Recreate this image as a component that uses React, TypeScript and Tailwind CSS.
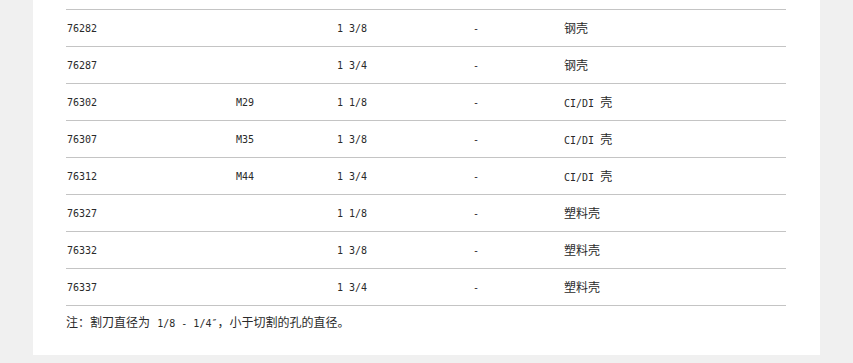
import React from 'react';

const rows = [
  { no: '76282', thread: '', size: '1 3/8', x: '-', shell: '钢壳' },
  { no: '76287', thread: '', size: '1 3/4', x: '-', shell: '钢壳' },
  { no: '76302', thread: 'M29', size: '1 1/8', x: '-', shell: 'CI/DI 壳' },
  { no: '76307', thread: 'M35', size: '1 3/8', x: '-', shell: 'CI/DI 壳' },
  { no: '76312', thread: 'M44', size: '1 3/4', x: '-', shell: 'CI/DI 壳' },
  { no: '76327', thread: '', size: '1 1/8', x: '-', shell: '塑料壳' },
  { no: '76332', thread: '', size: '1 3/8', x: '-', shell: '塑料壳' },
  { no: '76337', thread: '', size: '1 3/4', x: '-', shell: '塑料壳' },
];

const font = "font-['DejaVu_Sans_Mono','Noto_Sans_CJK_SC',monospace]";

function Shell({ text }: { text: string }) {
  // latin part stays 10px mono, CJK glyphs sit at 12px like the original
  const parts = text.split(/([\u4e00-\u9fff]+)/);
  return (
    <>
      {parts.map((p, i) =>
        /[\u4e00-\u9fff]/.test(p) ? (
          <span key={i} className="text-[12px]">{p}</span>
        ) : (
          <span key={i}>{p}</span>
        )
      )}
    </>
  );
}

export default function App() {
  return (
    <div className="w-[853px] h-[363px] bg-[#f0f0f0] overflow-hidden">
      <div className={`ml-[33px] w-[787px] bg-white pl-[33px] pt-[9px] pb-[8px] text-[#2a2a2a] ${font}`}>
        <div className="w-[720px] border-t border-[#c4c4c4]">
          {rows.map((r) => (
            <div key={r.no} className="flex items-center h-[37px] pt-[2px] border-b border-[#c4c4c4] text-[10px] leading-none">
              <div className="w-[170px] pl-px">{r.no}</div>
              <div className="w-[101px]">{r.thread}</div>
              <div className="w-[136px]">{r.size}</div>
              <div className="w-[91px]">{r.x}</div>
              <div className="flex-1"><Shell text={r.shell} /></div>
            </div>
          ))}
        </div>
        <div className="h-[41px] pt-[9px] text-[12px] leading-[16px]">
          注：割刀直径为 <span className="text-[10px]">1/8 - 1/4″</span>，小于切割的孔的直径。
        </div>
      </div>
    </div>
  );
}
